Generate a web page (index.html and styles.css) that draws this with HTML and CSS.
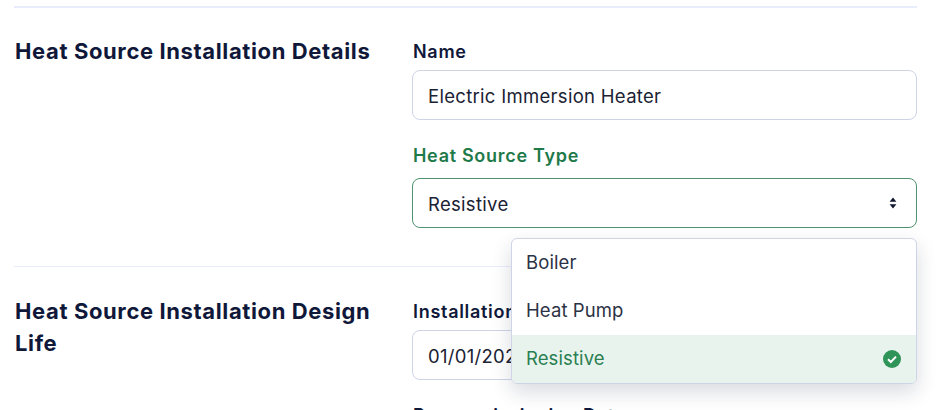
FILE: index.html
```html
<!DOCTYPE html>
<html lang="en">
<head>
<meta charset="utf-8">
<title>Heat Source</title>
<link rel="stylesheet" href="styles.css">
</head>
<body>
<main class="page">
  <section class="section">
    <h2 class="title">Heat Source Installation Details</h2>
    <div class="fields">
      <div class="field">
        <label class="label">Name</label>
        <div class="control">Electric Immersion Heater</div>
      </div>
      <div class="field select-field">
        <label class="label label-active">Heat Source Type</label>
        <div class="control control-active">
          <span>Resistive</span>
          <svg class="updown" width="8" height="12" viewBox="0 0 8 12"><path d="M4 .5 7.4 4.8H.6ZM4 11.5.6 7.2H7.4Z" fill="#10182f"/></svg>
        </div>
        <ul class="menu">
          <li class="option">Boiler</li>
          <li class="option">Heat Pump</li>
          <li class="option option-selected">
            <span>Resistive</span>
            <svg width="18" height="18" viewBox="0 0 18 18"><circle cx="9" cy="9" r="9" fill="#2e9457"/><path d="M5 9.3 7.8 12 13 6.6" fill="none" stroke="#fff" stroke-width="2"/></svg>
          </li>
        </ul>
      </div>
    </div>
  </section>
  <section class="section">
    <h2 class="title">Heat Source Installation Design Life</h2>
    <div class="fields">
      <div class="field">
        <label class="label">Installation Date</label>
        <div class="control">01/01/2020</div>
      </div>
      <div class="field">
        <label class="label">Recommissioning Date</label>
      </div>
    </div>
  </section>
</main>
</body>
</html>
```
FILE: styles.css
```css
* { box-sizing: border-box; }
html, body { margin: 0; height: 100%; overflow: hidden; background: #fff; }
.page { height: 410px; overflow: hidden; padding: 6px 23px 0 14px; font-family: "Inter", "Liberation Sans", sans-serif; color: #10182f; }
.section {
  display: grid;
  grid-template-columns: 398px 505px;
  border-top: 2px solid #e9ecfb;
  padding-top: 27px;
  padding-bottom: 38px;
}
.section + .section { border-top-width: 1px; padding-top: 28px; }
.title {
  margin: 0;
  padding-left: 1px;
  font-family: "Inter", "Liberation Sans", sans-serif;
  font-weight: 700;
  font-size: 22px;
  letter-spacing: 0.62px;
  line-height: 32px;
  color: #10183a;
  width: 375px;
}
.fields { display: flex; flex-direction: column; gap: 23px; padding-top: 4px; }
.field { position: relative; }
.label {
  display: block;
  padding: 1px 0 0 1px;
  font-size: 18px;
  font-weight: 600;
  letter-spacing: 0.7px;
  line-height: 24px;
  margin-bottom: 6px;
  color: #10183a;
}
.select-field .label { margin-bottom: 10px; }
.label-active { color: #1f7a4a; }
.control {
  display: flex;
  align-items: center;
  justify-content: space-between;
  height: 50px;
  padding: 1px 15px 0;
  border: 1px solid #ced4e6;
  border-radius: 8px;
  font-size: 18.5px;
  letter-spacing: 0.3px;
  color: #1a2233;
  background: #fff;
}
.control-active { border-color: #4f9470; }
.updown { margin-right: 4px; margin-top: -1px; }
.menu {
  position: absolute;
  top: 95px;
  left: 99px;
  right: 0;
  z-index: 5;
  margin: 0;
  padding: 0;
  list-style: none;
  background: #fff;
  border: 1px solid #cdd5e6;
  border-radius: 6px;
  overflow: hidden;
  box-shadow: 0 8px 20px rgba(20, 30, 60, 0.16);
}
.option {
  display: flex;
  align-items: center;
  justify-content: space-between;
  height: 48px;
  padding: 0 15px 2px 14px;
  font-size: 18.5px;
  letter-spacing: 0.1px;
  color: #2b3245;
}
.option-selected { background: #e9f3ee; color: #2a7f52; }
.option-selected svg { margin-top: 2px; }
```
